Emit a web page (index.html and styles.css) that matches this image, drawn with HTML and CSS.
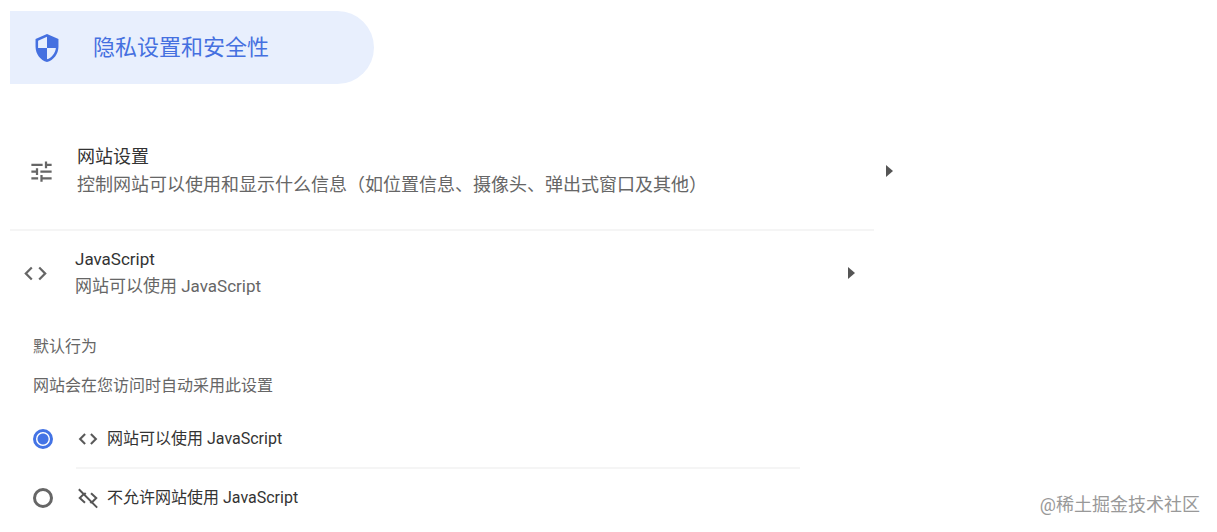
FILE: index.html
```html
<!DOCTYPE html>
<html lang="zh-CN">
<head>
    <meta charset="UTF-8">
    <meta name="viewport" content="width=device-width, initial-scale=1.0">
    <title>隐私设置和安全性</title>
    <link rel="stylesheet" href="styles.css">
</head>
<body>
    <a class="menu-item" href="#privacy">
        <svg class="shield" viewBox="3 1 18 22" aria-hidden="true">
            <path fill="currentColor" d="M12 1L3 5v6c0 5.55 3.84 10.74 9 12 5.16-1.26 9-6.45 9-12V5l-9-4zm0 10.99h7c-.53 4.12-3.28 7.79-7 8.94V12H5V6.3l7-3.11v8.8z"/>
        </svg>
        <span>隐私设置和安全性</span>
    </a>

    <main id="privacy">
        <!-- Site settings -->
        <section class="row row-site">
            <svg class="icon" viewBox="0 0 24 24" aria-hidden="true">
                <path fill="currentColor" d="M3 17v2h6v-2H3zM3 5v2h10V5H3zm10 16v-2h8v-2h-8v-2h-2v6h2zM7 9v2H3v2h4v2h2V9H7zm14 4v-2H11v2h10zm-6-4h2V7h4V5h-4V3h-2v6z"/>
            </svg>
            <div class="text">
                <h2>网站设置</h2>
                <p>控制网站可以使用和显示什么信息（如位置信息、摄像头、弹出式窗口及其他）</p>
            </div>
            <button class="arrow" type="button" aria-label="网站设置"></button>
        </section>

        <hr class="divider">

        <!-- JavaScript -->
        <section class="row row-js">
            <svg class="icon" viewBox="0 0 24 24" aria-hidden="true">
                <path fill="currentColor" d="M9.4 16.6L4.8 12l4.6-4.6L8 6l-6 6 6 6 1.4-1.4zm5.2 0l4.6-4.6-4.6-4.6L16 6l6 6-6 6-1.4-1.4z"/>
            </svg>
            <div class="text">
                <h2>JavaScript</h2>
                <p>网站可以使用 JavaScript</p>
            </div>
            <button class="arrow" type="button" aria-label="JavaScript"></button>
        </section>

        <form class="behavior">
            <h3>默认行为</h3>
            <p>网站会在您访问时自动采用此设置</p>

            <div class="option">
                <input type="radio" name="js" id="js-allow" checked>
                <label for="js-allow">
                    <svg class="icon-small" viewBox="0 0 24 24" aria-hidden="true">
                        <path fill="currentColor" stroke="currentColor" stroke-width=".4" d="M9.4 16.6L4.8 12l4.6-4.6L8 6l-6 6 6 6 1.4-1.4zm5.2 0l4.6-4.6-4.6-4.6L16 6l6 6-6 6-1.4-1.4z"/>
                    </svg>
                    <span>网站可以使用 JavaScript</span>
                </label>
            </div>
            <hr class="divider">
            <div class="option">
                <input type="radio" name="js" id="js-block">
                <label for="js-block">
                    <svg class="icon-small" viewBox="0 0 24 24" aria-hidden="true">
                        <path fill="none" stroke="currentColor" stroke-width="2.2" d="M2 2.500L22 22.500M7.300 7.800L3 12l5.700 5.300M15.300 6.700L21 12l-4.300 4.300M9.500 6.500L8 8M14.500 17.500L16 16"/>
                    </svg>
                    <span>不允许网站使用 JavaScript</span>
                </label>
            </div>
        </form>
    </main>

    <div class="watermark">@稀土掘金技术社区</div>
</body>
</html>
```
FILE: styles.css
```css
* {
    box-sizing: border-box;
}
body {
    position: relative;
    min-height: 100vh;
    margin: 0;
    padding: 11px 10px 0;
    background: #fff;
    color: #333;
    font-family: Roboto, "Noto Sans CJK SC", sans-serif;
}
h2, h3, p {
    margin: 0;
    font-size: inherit;
    font-weight: 400;
}
.menu-item {
    display: flex;
    align-items: center;
    gap: 34px;
    width: 100%;
    max-width: 364px;
    height: 73px;
    padding-left: 25px;
    border-radius: 0 37px 37px 0;
    background: #e8effd;
    color: #4570e0;
    font-size: 22px;
    line-height: 28px;
    text-decoration: none;
}
.shield {
    width: 24px;
    height: 28px;
}
.row {
    display: flex;
    align-items: center;
    color: #666;
}
.row h2 {
    color: #333;
}
.text {
    flex: 1;
}
.row-site {
    max-width: 886px;
    padding: 59px 0 30px 18px;
    gap: 22px;
    font-size: 18px;
    line-height: 28px;
}
.row-js {
    max-width: 848px;
    padding: 15px 0 15px 12px;
    gap: 26px;
    font-size: 17px;
    line-height: 27px;
}
.icon {
    flex: none;
    width: 27px;
    height: 27px;
}
.arrow {
    width: 12px;
    height: 24px;
    padding: 0;
    border: none;
    background: none;
    cursor: pointer;
}
.arrow::before {
    content: "";
    display: block;
    width: 0;
    margin-left: 2px;
    border: 6px solid transparent;
    border-left: 7px solid #555;
    border-right: 0;
}
.divider {
    max-width: 864px;
    height: 2px;
    margin: 0;
    border: none;
    background: #f5f5f5;
}
.behavior {
    max-width: 790px;
    padding: 20px 0 0 23px;
    color: #666;
    font-size: 16px;
    line-height: 24px;
}
.behavior p {
    margin: 15px 0 12px;
}
.behavior .divider {
    margin: 0 0 0 43px;
}
.option {
    display: flex;
    align-items: center;
    gap: 24px;
    height: 57px;
}
.option input {
    appearance: none;
    flex: none;
    width: 20px;
    height: 20px;
    margin: 0;
    border: 3px solid #666;
    border-radius: 50%;
}
.option input:checked {
    border-color: #4373e5;
    background: radial-gradient(#4373e5 5px, #fff 6px);
}
.option label {
    display: flex;
    align-items: center;
    gap: 8px;
    color: #333;
}
.icon-small {
    width: 22px;
    height: 22px;
    color: #555;
}
.watermark {
    position: absolute;
    right: 17px;
    bottom: 14px;
    color: #999;
    font-size: 18px;
    line-height: 26px;
}
```
